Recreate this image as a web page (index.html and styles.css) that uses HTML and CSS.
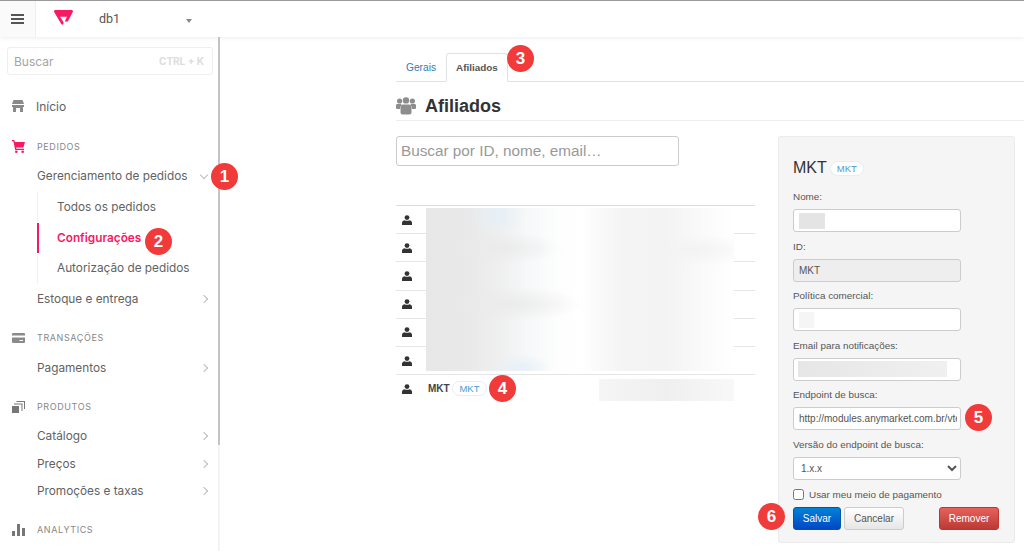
FILE: index.html
```html
<!DOCTYPE html>
<html lang="en">
<head>
    <meta charset="UTF-8">
    <meta name="viewport" content="width=device-width, initial-scale=1.0">
    <title>Afiliados</title>
    <link rel="stylesheet" href="styles.css">
</head>
<body>

<header class="topbar">
    <div class="menu-btn">
        <svg width="13" height="10" viewBox="0 0 13 10"><path d="M0 0h13v2H0zM0 4h13v2H0zM0 8h13v2H0z" fill="#555"/></svg>
    </div>
    <div class="brand">
        <svg class="logo" width="19" height="15" viewBox="0 0 19 15"><path fill-rule="evenodd" d="M1.500 0H17.500C18.700 0 19.300 1 18.800 2L13.800 11.500H10.800L13 6.800H6L9.600 12.200 9.400 13.800C9 15 8 15.200 7.300 14L.3 2.200C-.3 1 .3 0 1.500 0Z" fill="#f71963"/></svg>
        <span class="account">db1</span>
        <span class="caret"></span>
    </div>
</header>

<div class="layout">
    <!-- Sidebar -->
    <nav class="sidebar">
        <div class="search-box">
            <span>Buscar</span>
            <span class="shortcut">CTRL + K</span>
        </div>

        <div class="home-row">
            <svg class="nav-icon" width="12" height="12" viewBox="0 0 12 12"><path d="M1.500 0h9L12 4H0zM0 5h12v2h-1v5H8V8H4v4H1V7H0z" fill="#8a8a8a"/></svg>
            <span>Início</span>
        </div>

        <div class="group-title pedidos">
            <svg class="nav-icon" width="13" height="13" viewBox="0 0 13 13"><path d="M0 0h2.400l.5 2H13l-1.600 5.600H4.200l.3 1.200H12v1.200H3.200L1.400 1.200H0z" fill="#f71963"/><circle cx="4.300" cy="11.700" r="1.300" fill="#f71963"/><circle cx="10.700" cy="11.700" r="1.300" fill="#f71963"/></svg>
            <span>PEDIDOS</span>
        </div>
        <div class="nav-item">Gerenciamento de pedidos <span class="chevron down"></span></div>
        <div class="sub-list">
            <div class="sub-item">Todos os pedidos</div>
            <div class="sub-item active">Configurações</div>
            <div class="sub-item">Autorização de pedidos</div>
        </div>
        <div class="nav-item">Estoque e entrega <span class="chevron"></span></div>

        <div class="group-title transacoes">
            <svg class="nav-icon" width="13" height="10" viewBox="0 0 13 10"><path d="M1 0h11a1 1 0 0 1 1 1v1.500H0V1a1 1 0 0 1 1-1zM0 4.500h13V9a1 1 0 0 1-1 1H1a1 1 0 0 1-1-1zM7.500 7v1H11V7z" fill="#8a8a8a"/></svg>
            <span>TRANSAÇÕES</span>
        </div>
        <div class="nav-item">Pagamentos <span class="chevron"></span></div>

        <div class="group-title produtos">
            <svg class="nav-icon" width="13" height="13" viewBox="0 0 13 13"><path d="M0 6h7v7H0z" fill="#777"/><path d="M2 3.500h8.500V11h-1V4.500H2zM4.500 1H13v8h-1V2H4.500z" fill="#777"/></svg>
            <span>PRODUTOS</span>
        </div>
        <div class="nav-item tight">Catálogo <span class="chevron"></span></div>
        <div class="nav-item tight">Preços <span class="chevron"></span></div>
        <div class="nav-item tight">Promoções e taxas <span class="chevron"></span></div>

        <div class="group-title analytics">
            <svg class="nav-icon" width="13" height="12" viewBox="0 0 13 12"><path d="M0 7h3v5H0zM5 0h3v12H5zM10 4h3v8h-3z" fill="#777"/></svg>
            <span>ANALYTICS</span>
        </div>
        <div class="scroll-thumb"></div>
    </nav>

    <!-- Main content -->
    <main class="content">
        <div class="tabs">
            <a class="tab">Gerais</a>
            <a class="tab current">Afiliados</a>
        </div>

        <h1 class="page-title">
            <svg width="20" height="18" viewBox="0 0 20 18"><g fill="#8d8d8d"><circle cx="3.600" cy="4" r="2.600"/><circle cx="16.400" cy="4" r="2.600"/><circle cx="10" cy="3.400" r="3.200"/><path d="M0 8.200C0 7 1 7 2 7h3l.6 1C4.600 9 4 10.500 4 12H1C0 12 0 11 0 10zM20 8.200C20 7 19 7 18 7h-3l-.6 1c1 1 1.600 2.500 1.600 4h3c1 0 1-1 1-2z"/><path d="M7 7.500h6c1.800 0 2.500 1.500 2.500 3.500v4.500c0 1.200-1 2-2 2h-7c-1 0-2-.8-2-2V11c0-2 .7-3.500 2.500-3.500z"/></g></svg>
            Afiliados
        </h1>

        <div class="columns">
            <section class="list">
                <input class="list-search" type="text" placeholder="Buscar por ID, nome, email…">
                <table class="aff-table">
                    <tr><td class="icon-cell"><svg class="user" viewBox="0 0 10 10"><circle cx="5" cy="2.600" r="2.400"/><path d="M0 10V7.800C0 6 1.500 5.400 2.500 5.200 3.500 6 6.500 6 7.500 5.200 8.500 5.400 10 6 10 7.800V10z"/></svg></td><td></td></tr>
                    <tr><td class="icon-cell"><svg class="user" viewBox="0 0 10 10"><circle cx="5" cy="2.600" r="2.400"/><path d="M0 10V7.800C0 6 1.500 5.400 2.500 5.200 3.500 6 6.500 6 7.500 5.200 8.500 5.400 10 6 10 7.800V10z"/></svg></td><td></td></tr>
                    <tr><td class="icon-cell"><svg class="user" viewBox="0 0 10 10"><circle cx="5" cy="2.600" r="2.400"/><path d="M0 10V7.800C0 6 1.500 5.400 2.500 5.200 3.500 6 6.500 6 7.500 5.200 8.500 5.400 10 6 10 7.800V10z"/></svg></td><td></td></tr>
                    <tr><td class="icon-cell"><svg class="user" viewBox="0 0 10 10"><circle cx="5" cy="2.600" r="2.400"/><path d="M0 10V7.800C0 6 1.500 5.400 2.500 5.200 3.500 6 6.500 6 7.500 5.200 8.500 5.400 10 6 10 7.800V10z"/></svg></td><td></td></tr>
                    <tr><td class="icon-cell"><svg class="user" viewBox="0 0 10 10"><circle cx="5" cy="2.600" r="2.400"/><path d="M0 10V7.800C0 6 1.500 5.400 2.500 5.200 3.500 6 6.500 6 7.500 5.200 8.500 5.400 10 6 10 7.800V10z"/></svg></td><td></td></tr>
                    <tr><td class="icon-cell"><svg class="user" viewBox="0 0 10 10"><circle cx="5" cy="2.600" r="2.400"/><path d="M0 10V7.800C0 6 1.500 5.400 2.500 5.200 3.500 6 6.500 6 7.500 5.200 8.500 5.400 10 6 10 7.800V10z"/></svg></td><td></td></tr>
                    <tr><td class="icon-cell"><svg class="user" viewBox="0 0 10 10"><circle cx="5" cy="2.600" r="2.400"/><path d="M0 10V7.800C0 6 1.500 5.400 2.500 5.200 3.500 6 6.500 6 7.500 5.200 8.500 5.400 10 6 10 7.800V10z"/></svg></td><td class="name-cell"><b>MKT</b> <span class="tag">MKT</span></td></tr>
                </table>
                <div class="blur-block"></div>
                <div class="blur-last"></div>
            </section>

            <aside class="panel">
                <h3 class="panel-title">MKT <span class="tag big">MKT</span></h3>

                <label>Nome:</label>
                <div class="field"><span class="mask mask-name"></span></div>
                <label>ID:</label>
                <input class="field disabled" type="text" value="MKT" disabled>
                <label>Política comercial:</label>
                <div class="field"><span class="mask mask-policy"></span></div>
                <label>Email para notificações:</label>
                <div class="field"><span class="mask mask-email"></span></div>
                <label>Endpoint de busca:</label>
                <input class="field" type="text" value="http://modules.anymarket.com.br/vtex">
                <label>Versão do endpoint de busca:</label>
                <select class="field select"><option>1.x.x</option></select>
                <div class="check-row">
                    <input type="checkbox">
                    <span>Usar meu meio de pagamento</span>
                </div>
                <div class="actions">
                    <button class="btn primary">Salvar</button>
                    <button class="btn">Cancelar</button>
                    <button class="btn danger">Remover</button>
                </div>
            </aside>
        </div>
    </main>
</div>

<!-- Red numbered callouts drawn over the screenshot -->
<span class="mark m1">1</span>
<span class="mark m2">2</span>
<span class="mark m3">3</span>
<span class="mark m4">4</span>
<span class="mark m5">5</span>
<span class="mark m6">6</span>

</body>
</html>
```

FILE: styles.css
```css
* {
    box-sizing: border-box;
}
html, body {
    height: 551px;
    overflow: hidden;
}
body {
    margin: 0;
    position: relative;
    background-color: #fff;
    font-family: "Liberation Sans", Arial, sans-serif;
    color: #333;
}

/* Top bar */
.topbar {
    height: 37px;
    display: flex;
    border-top: 1px solid #999;
    background-color: #fff;
    box-shadow: 0 1px 4px rgba(0, 0, 0, 0.08);
    position: relative;
}
.menu-btn {
    width: 36px;
    display: flex;
    align-items: center;
    justify-content: center;
    border-right: 1px solid #eee;
    background-color: #fafafa;
}
.brand {
    display: flex;
    align-items: center;
    padding-left: 18px;
    font-family: Roboto, sans-serif;
}
.logo {
    margin-top: -3px;
}
.account {
    margin-left: 26px;
    margin-top: -2px;
    width: 87px;
    font-size: 12.5px;
    color: #555;
}
.caret {
    margin-top: 3px;
    border-left: 3px solid transparent;
    border-right: 3px solid transparent;
    border-top: 4px solid #888;
}

.layout {
    display: flex;
    height: 514px;
}

/* Sidebar */
.sidebar {
    width: 220px;
    padding: 10px 5px 0 7px;
    position: relative;
    font-family: Inter, sans-serif;
    font-size: 12px;
    color: #626262;
    border-right: 2px solid #f4f4f4;
}
.scroll-thumb {
    position: absolute;
    top: 0;
    right: -2px;
    width: 2px;
    height: 408px;
    background-color: #c4c4c4;
}
.search-box {
    height: 28px;
    display: flex;
    align-items: center;
    justify-content: space-between;
    padding: 0 8px 0 6px;
    border: 1px solid #eee;
    border-radius: 3px;
    font-size: 12px;
    color: #a5a5a5;
}
.shortcut {
    font-size: 10px;
    font-weight: 700;
    color: #ddd;
}
.home-row {
    height: 20px;
    margin-top: 21px;
    display: flex;
    align-items: center;
    font-size: 12px;
}
.nav-icon {
    flex: none;
    margin: 0 0 0 5px;
}
.home-row .nav-icon {
    margin-right: 12px;
}
.group-title {
    height: 16px;
    display: flex;
    align-items: center;
    font-size: 9px;
    letter-spacing: 0.6px;
    color: #888;
}
.group-title span {
    position: absolute;
    left: 37px;
}
.pedidos {
    margin-top: 22px;
}
.transacoes {
    margin-top: 16px;
}
.produtos {
    margin-top: 16px;
}
.analytics {
    margin-top: 16.5px;
}
.nav-item {
    height: 30px;
    display: flex;
    align-items: center;
    justify-content: space-between;
    padding: 0 6px 0 30px;
    font-size: 11.8px;
}
.nav-item.tight {
    height: 27.5px;
}
.group-title + .nav-item {
    margin-top: 7px;
}
.produtos + .nav-item {
    margin-top: 8px;
}
.chevron {
    width: 6px;
    height: 6px;
    border-top: 1px solid #bbb;
    border-right: 1px solid #bbb;
    transform: rotate(45deg);
}
.chevron.down {
    transform: rotate(135deg);
    margin-top: -3px;
}
.sub-list {
    margin: 1px 0 0 30px;
    border-left: 1px solid #f0f0f0;
}
.sub-item {
    height: 30.5px;
    display: flex;
    align-items: center;
    padding-left: 18px;
    margin-left: -1px;
    border-left: 2px solid transparent;
    font-size: 11.8px;
}
.sub-item.active {
    border-left-color: #f71963;
    color: #f71963;
    font-weight: 600;
}

/* Main content */
.content {
    flex: 1;
    padding: 15px 0 0 176px;
}
.tabs {
    display: flex;
    height: 30px;
    padding-top: 1px;
    border-bottom: 1px solid #e2e2e2;
}
.tab {
    height: 29px;
    padding: 0 10px;
    display: flex;
    align-items: center;
    font-size: 10.2px;
    color: #337ab7;
}
.tab.current {
    padding: 0 9px;
    border: 1px solid #e2e2e2;
    border-bottom-color: #fff;
    border-radius: 3px 3px 0 0;
    font-size: 9.9px;
    font-weight: 700;
    color: #555;
}
.page-title {
    height: 39px;
    margin: 0 0 15px;
    padding-top: 10px;
    display: flex;
    align-items: center;
    gap: 9px;
    font-size: 18px;
    font-weight: 700;
    color: #333;
    border-bottom: 1px solid #eee;
}
.columns {
    display: flex;
    align-items: flex-start;
}
.list {
    width: 359px;
    position: relative;
}
.list-search {
    display: block;
    width: 283px;
    height: 30px;
    padding: 0 4px;
    border: 1px solid #ccc;
    border-radius: 3px;
    font-family: inherit;
    font-size: 15.3px;
}
.list-search::placeholder {
    color: #999;
}
.aff-table {
    width: 100%;
    margin-top: 39px;
    border-collapse: collapse;
    border-top: 1px solid #ddd;
}
.aff-table td {
    height: 28.2px;
    padding: 0;
    border-bottom: 1px solid #e5e5e5;
    font-size: 10px;
}
.aff-table tr:last-child td {
    border-bottom: none;
}
.icon-cell {
    width: 30px;
    padding-left: 6px !important;
}
.user {
    display: block;
    width: 10px;
    height: 10px;
    fill: #333;
}
.name-cell {
    padding-left: 2px !important;
}
.name-cell b {
    color: #444;
}
.tag {
    display: inline-block;
    padding: 0 6px;
    line-height: 13px;
    border: 1px solid #e3eef6;
    border-radius: 8px;
    background-color: #fff;
    font-size: 9.5px;
    font-weight: 400;
    color: #4a9ad4;
}

/* Blurred-out data */
.blur-block {
    position: absolute;
    left: 30px;
    top: 72px;
    width: 308px;
    height: 163px;
    background:
        radial-gradient(ellipse 26px 20px at 72px 8px, #e6f0f7, transparent),
        radial-gradient(ellipse 30px 14px at 95px 160px, #e6f0f7, transparent),
        radial-gradient(ellipse 60px 16px at 75px 40px, #ebebeb, transparent),
        radial-gradient(ellipse 70px 18px at 85px 96px, #ebebeb, transparent),
        radial-gradient(ellipse 60px 16px at 270px 42px, #f3f3f3, transparent),
        linear-gradient(90deg, #e7e7e7 0, #e9e9e9 14%, #efefef 24%, #f6f8f9 33%, #fdfdfd 42%, #fff 50%, #fafafa 56%, #f4f4f4 64%, #f3f3f3 78%, #f9f9f9 88%, #fff 100%);
}
.blur-last {
    position: absolute;
    left: 203px;
    top: 243px;
    width: 135px;
    height: 22px;
    background: linear-gradient(90deg, #f5f5f5, #efefef 50%, #f8f8f8);
}

/* Detail panel */
.panel {
    width: 237px;
    height: 407px;
    margin-left: 23px;
    padding: 21px 14px 0;
    background-color: #f5f5f5;
    border: 1px solid #ebebeb;
    border-radius: 3px;
}
.panel-title {
    margin: 0 0 11px;
    height: 20px;
    font-size: 16px;
    font-weight: 400;
    color: #333;
    display: flex;
    align-items: center;
    gap: 3px;
}
.panel label {
    display: block;
    height: 14px;
    line-height: 15px;
    font-size: 9.9px;
    color: #555;
    margin-bottom: 6px;
}
.field {
    display: flex;
    align-items: center;
    width: 168px;
    height: 23px;
    margin-bottom: 6.5px;
    padding: 0 3px 0 5px;
    border: 1px solid #ccc;
    border-radius: 3px;
    background-color: #fff;
    font-family: inherit;
    font-size: 10px;
    color: #555;
}
.field.disabled {
    background-color: #eee;
}
.field.select {
    margin-bottom: 0;
    padding: 0 3px;
}
.mask {
    display: block;
    height: 16px;
}
.mask-name {
    width: 26px;
    background-color: #e4e4e4;
}
.mask-policy {
    width: 15px;
    background-color: #f5f5f5;
}
.mask-email {
    width: 149px;
    margin-left: -1px;
    background: linear-gradient(90deg, #e6e6e6, #ececec 60%, #f0f0f0);
}
.check-row {
    display: flex;
    align-items: center;
    gap: 5px;
    height: 14px;
    margin: 8px 0 5px;
    font-size: 9.9px;
    color: #555;
}
.check-row input {
    width: 11px;
    height: 11px;
    margin: 0;
}
.actions {
    display: flex;
    gap: 3px;
}
.btn {
    width: 60px;
    height: 23px;
    padding: 0;
    border: 1px solid #ccc;
    border-radius: 3px;
    background: linear-gradient(#fff, #e6e6e6);
    font-family: inherit;
    font-size: 10px;
    color: #555;
}
.btn.primary {
    width: 48px;
    border-color: #0055aa;
    background: linear-gradient(#0082d8, #0048c4);
    color: #fff;
}
.btn.danger {
    margin-left: 32px;
    border-color: #bd362f;
    background: linear-gradient(#e8605c, #bb3a34);
    color: #fff;
}

/* Numbered callouts */
.mark {
    position: absolute;
    width: 27px;
    height: 27px;
    line-height: 27px;
    border-radius: 50%;
    background-color: #f13a3a;
    text-align: center;
    font-size: 17px;
    font-weight: 700;
    color: #fff;
}
.m1 { left: 211px; top: 163px; }
.m2 { left: 145px; top: 228px; }
.m3 { left: 507px; top: 45px; }
.m4 { left: 489px; top: 375px; }
.m5 { left: 965px; top: 404px; }
.m6 { left: 758px; top: 503px; }
```
